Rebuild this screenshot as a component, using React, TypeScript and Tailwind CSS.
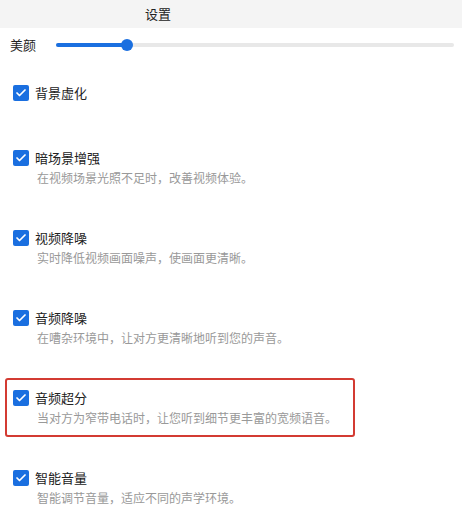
import { Check } from "lucide-react";

const items = [
  { title: "背景虚化", desc: "" },
  { title: "暗场景增强", desc: "在视频场景光照不足时，改善视频体验。" },
  { title: "视频降噪", desc: "实时降低视频画面噪声，使画面更清晰。" },
  { title: "音频降噪", desc: "在嘈杂环境中，让对方更清晰地听到您的声音。" },
  { title: "音频超分", desc: "当对方为窄带电话时，让您听到细节更丰富的宽频语音。", marked: true },
  { title: "智能音量", desc: "智能调节音量，适应不同的声学环境。" },
];

function Item({ title, desc, marked }: { title: string; desc: string; marked?: boolean }) {
  return (
    <div className={`relative pl-[13px] ${desc ? "" : "mb-[5px]"}`}>
      {/* red highlight frame drawn over the row */}
      {marked && (
        <div className="absolute left-[5px] right-[107px] top-[-10px] bottom-[-9px] rounded-[3px] border-2 border-[#d33b32]" />
      )}
      <div className="flex items-center gap-[6px]">
        <span className="flex h-4 w-4 items-center justify-center rounded-[2px] bg-[#1a6fe0]">
          <Check size={12} strokeWidth={3.5} color="white" />
        </span>
        <span className="text-[13px] leading-5 text-[#222]">{title}</span>
      </div>
      {desc && <div className="pl-[24px] text-[12px] leading-5 text-[#999]">{desc}</div>}
    </div>
  );
}

export default function App() {
  return (
    <div
      className="h-[515px] w-[462px] overflow-hidden bg-white"
      style={{ fontFamily: '"Noto Sans CJK SC", "Noto Sans", sans-serif' }}
    >
      <div className="flex h-[28px] items-center bg-[#f4f4f4] pl-[145px] text-[13px] text-[#222]">设置</div>

      <div className="flex h-[34px] items-center pl-[10px] pr-[8px]">
        <span className="w-[46px] text-[13px] text-[#222]">美颜</span>
        <div className="relative h-[4px] flex-1 rounded-full bg-[#e8e8e8]">
          <div className="absolute left-0 top-0 h-full w-[71px] rounded-full bg-[#1a6fe0]" />
          <div className="absolute left-[65px] top-[-4px] h-[12px] w-[12px] rounded-full bg-[#1a6fe0]" />
        </div>
      </div>

      <div className="mt-[21px] flex flex-col gap-[40px]">
        {items.map((it) => (
          <Item key={it.title} {...it} />
        ))}
      </div>
    </div>
  );
}
